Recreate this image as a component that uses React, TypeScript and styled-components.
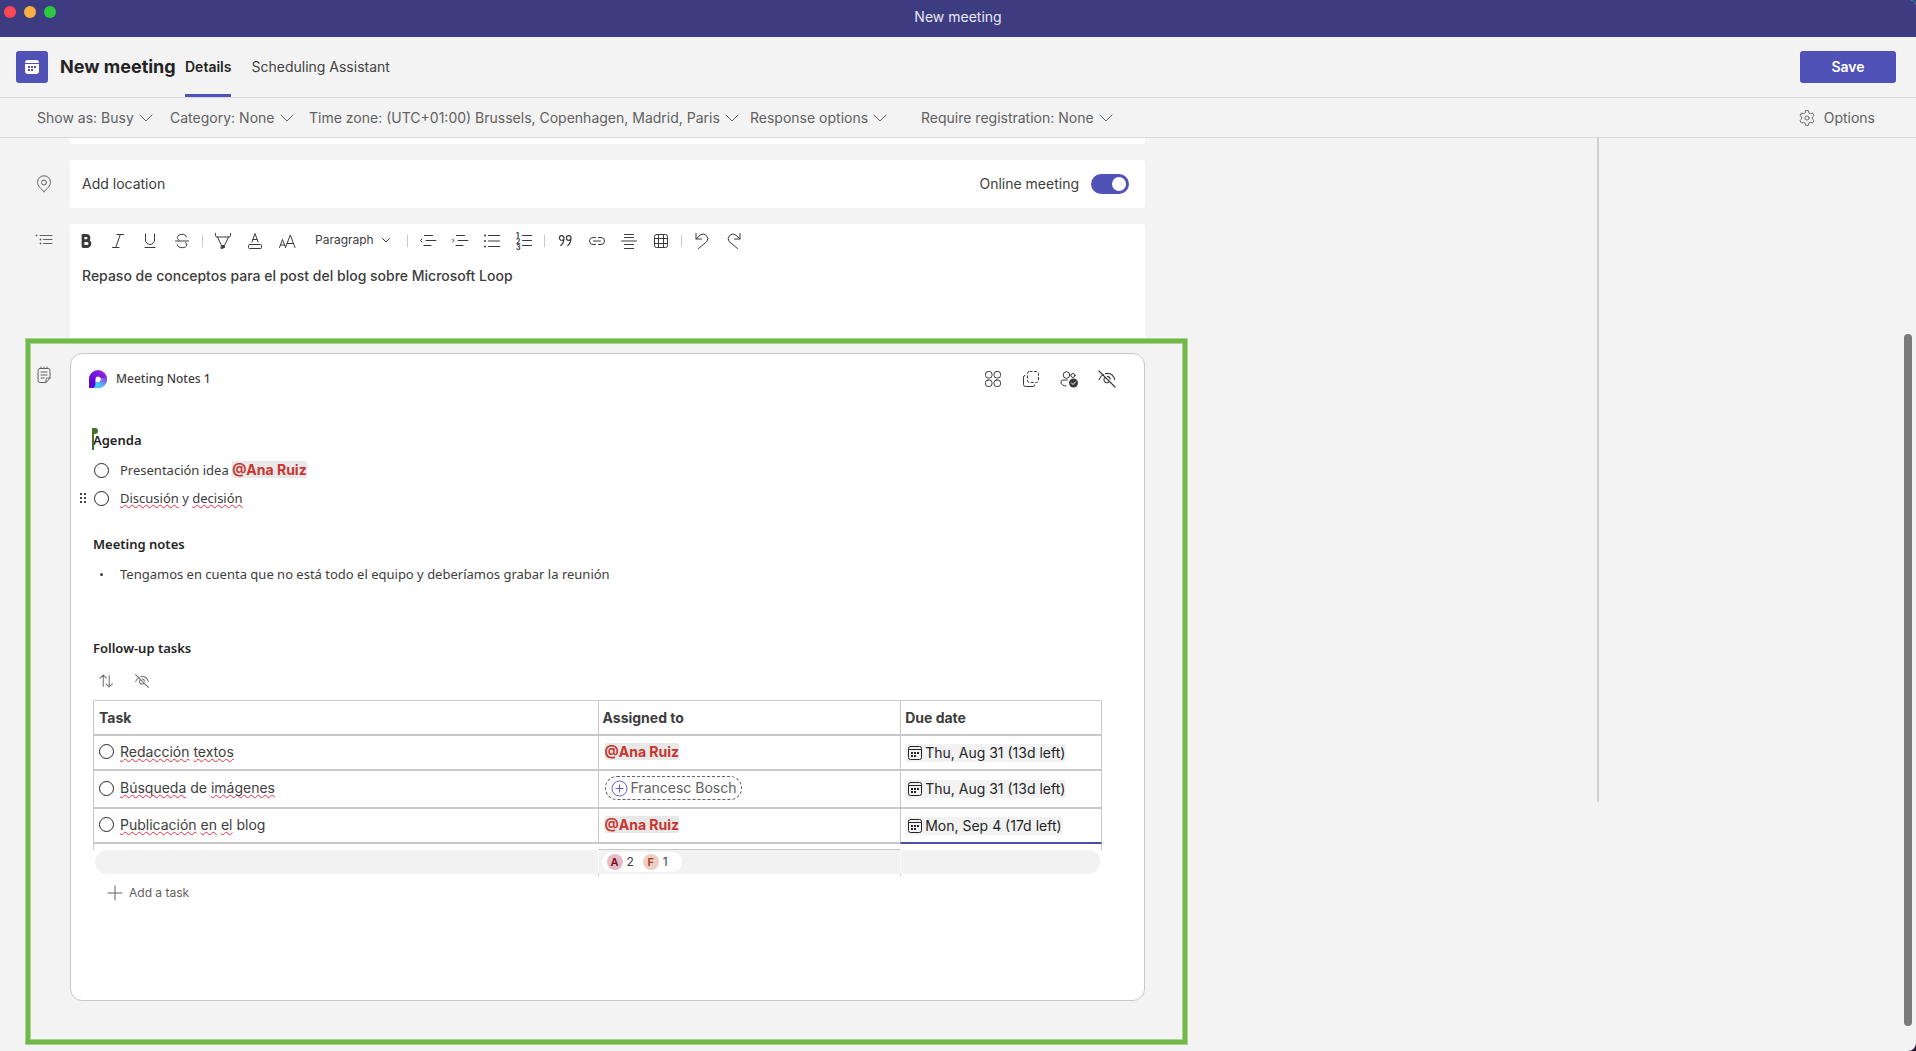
import React from "react";
import styled, { createGlobalStyle, css } from "styled-components";

const ui = '"Inter", "Liberation Sans", sans-serif';
const doc = '"Noto Sans", "Open Sans", sans-serif';

const GlobalStyle = createGlobalStyle`
  *, *::before, *::after { box-sizing: border-box; }
  body {
    margin: 0;
    background: linear-gradient(#14587e, #2b1030);
    font-family: ${ui};
    font-size: 14px;
    line-height: 20px;
    color: #3d3d3d;
  }
  button, input, select, textarea { font: inherit; color: inherit; }
  button, select { cursor: pointer; }
  h1, h2, p, ul { margin: 0; padding: 0; }
`;

/* ---------- window chrome ---------- */

const Window = styled.div`
  display: flex;
  flex-direction: column;
  min-height: 100vh;
  overflow: hidden;
  background: #f3f3f3;
  border-radius: 0 6px 8px 0;
`;

const TitleBar = styled.div`
  display: grid;
  grid-template-columns: 1fr auto 1fr;
  align-items: start;
  height: 37px;
  padding: 6px 4px;
  background: #3d3c80;
  color: #e8e8f4;
`;

const Lights = styled.div`
  display: flex;
  gap: 8px;
`;

const Light = styled.button<{ $color: string }>`
  width: 12px;
  height: 12px;
  padding: 0;
  border: 0;
  border-radius: 50%;
  background: ${(p) => p.$color};
`;

const TitleText = styled.span`
  line-height: 22px;
`;

const Header = styled.header`
  display: flex;
  align-items: center;
  height: 61px;
  padding: 0 20px 0 16px;
  border-bottom: 1px solid #dadada;
`;

const AppBadge = styled.span`
  display: grid;
  place-items: center;
  width: 32px;
  height: 32px;
  border-radius: 3px;
  background: #5052b8;
`;

const PageTitle = styled.h1`
  width: 125px;
  padding-left: 12px;
  font-size: 18px;
  font-weight: 700;
  color: #242424;
  white-space: nowrap;
`;

const Tabs = styled.nav`
  display: flex;
  flex: 1;
  gap: 20px;
  align-self: stretch;
  padding-left: 12px;
`;

const Tab = styled.a<{ $active?: boolean }>`
  display: flex;
  align-items: center;
  padding-top: 3px;
  border-bottom: 3px solid ${(p) => (p.$active ? "#5052b8" : "transparent")};
  font-weight: ${(p) => (p.$active ? 600 : 400)};
  color: ${(p) => (p.$active ? "#242424" : "#424242")};
  text-decoration: none;
`;

const SaveButton = styled.button`
  width: 96px;
  height: 32px;
  border: 0;
  border-radius: 3px;
  background: #5052b8;
  color: #fff;
  font-weight: 600;
`;

const OptionsBar = styled.div`
  display: flex;
  align-items: center;
  height: 40px;
  padding: 0 41px 0 37px;
  border-bottom: 1px solid #dadada;
  color: #616161;
`;

const Field = styled.div<{ $width: number }>`
  display: flex;
  align-items: center;
  width: ${(p) => p.$width}px;
  white-space: nowrap;
`;

const FieldLabel = styled.label`
  margin-right: 4px;
`;

const SelectWrap = styled.span`
  display: inline-grid;
  grid-template-columns: auto 16px;
  column-gap: 4px;
  align-items: center;

  & > select {
    grid-area: 1 / 1 / 2 / 3;
    padding: 0 20px 0 0;
    border: 0;
    background: transparent;
    appearance: none;
  }
  & > svg {
    grid-area: 1 / 2;
    pointer-events: none;
  }
`;

const PlainButton = styled.button<{ $gap?: number }>`
  display: inline-flex;
  align-items: center;
  gap: ${(p) => p.$gap ?? 8}px;
  padding: 0;
  border: 0;
  background: none;
  white-space: nowrap;
`;

const Spacer = styled.span`
  flex: 1;
`;

/* ---------- body ---------- */

const Body = styled.main`
  position: relative;
  display: flex;
  flex: 1;
  align-items: flex-start;
`;

const FormPane = styled.div`
  flex: 1;
  min-width: 0;
  padding-bottom: 6px;
`;

const AttendeePane = styled.aside`
  width: 319px;
  height: 664px;
  border-left: 2px solid #cfcfcf;
`;

const ScrollThumb = styled.div`
  position: absolute;
  top: 196px;
  right: 4px;
  bottom: 25px;
  width: 8px;
  border-radius: 4px;
  background: #797979;
`;

const FormRow = styled.div<{ $gap?: boolean }>`
  display: grid;
  grid-template-columns: 70px minmax(0, 1075px);
  margin-bottom: ${(p) => (p.$gap ? 16 : 0)}px;
`;

const RowIcon = styled.span<{ $top?: number }>`
  display: flex;
  justify-content: flex-end;
  padding: ${(p) => p.$top ?? 0}px 16px 0 0;
  color: #616161;
`;

const CardTail = styled.div`
  grid-column: 2;
  height: 6px;
  border-radius: 0 0 3px 3px;
  background: #fff;
`;

const LocationCard = styled.div`
  display: flex;
  align-items: center;
  height: 48px;
  padding: 0 16px 0 12px;
  border-radius: 3px;
  background: #fff;
`;

const LocationInput = styled.input`
  flex: 1;
  padding: 0;
  border: 0;
  background: transparent;
  &::placeholder { color: #3d3d3d; opacity: 1; }
`;

const Toggle = styled.input`
  width: 38px;
  height: 20px;
  margin: 0 0 0 12px;
  border-radius: 10px;
  background: #c8c8c8;
  appearance: none;

  &::before {
    content: "";
    display: block;
    width: 14px;
    height: 14px;
    margin: 3px;
    border-radius: 50%;
    background: #fff;
  }
  &:checked { background: #5052b8; }
  &:checked::before { margin-left: 21px; }
`;

const EditorCard = styled.div`
  height: 114px;
  border-radius: 3px 3px 0 0;
  background: #fff;
`;

const EditorToolbar = styled.div`
  display: flex;
  align-items: center;
  height: 34px;
`;

const ToolButton = styled.button<{ $width?: number }>`
  display: grid;
  place-items: center;
  width: ${(p) => p.$width ?? 32}px;
  height: 32px;
  padding: 0;
  border: 0;
  background: none;
  color: #3a3a3a;
`;

const ToolDivider = styled.span`
  width: 1px;
  height: 12px;
  margin: 0 4px;
  background: #c8c8c8;
`;

const ParagraphWrap = styled.span`
  display: grid;
  grid-template-columns: 1fr 16px;
  align-items: center;
  width: 100px;
  padding: 0 9px 2px 12px;

  & > select {
    grid-area: 1 / 1 / 2 / 3;
    padding: 0;
    border: 0;
    background: transparent;
    font-size: 12px;
    appearance: none;
  }
  & > svg { grid-area: 1 / 2; pointer-events: none; }
`;

const EditorText = styled.textarea`
  display: block;
  width: 100%;
  height: 72px;
  padding: 8px 12px;
  border: 0;
  outline: 0;
  resize: none;
  background: transparent;
  font-weight: 500;
`;

/* ---------- notes component ---------- */

const Highlight = styled.section`
  display: grid;
  grid-template-columns: 44px minmax(0, 1075px) 42px;
  width: 1163px;
  max-width: calc(100% - 25px);
  margin-left: 25px;
  padding: 14px 0 43px;
  border: 1px solid #a8d492;
  box-shadow: inset 0 0 0 4px #70b84a, inset 0 0 0 5px #a8d492;
`;

const NotesCard = styled.article`
  min-height: 648px;
  padding: 0 42px 0 22px;
  border: 1px solid #c8c8c8;
  border-radius: 12px;
  background: #fff;
  font-family: ${doc};
`;

const NotesHeader = styled.header`
  display: flex;
  align-items: center;
  height: 50px;
  margin: 0 -24px 0 -4px;
`;

const NotesTitle = styled.span`
  flex: 1;
  padding-left: 9px;
  font-size: 12px;
  font-weight: 500;
`;

const DocHeading = styled.h2<{ $top: number }>`
  margin-top: ${(p) => p.$top}px;
  font-size: 13px;
  font-weight: 600;
  color: #242424;
`;

const Caret = styled.span`
  position: relative;
  &::before {
    content: "";
    position: absolute;
    top: -3px;
    left: -1px;
    width: 2px;
    height: 22px;
    background: #47702d;
  }
  &::after {
    content: "";
    position: absolute;
    top: -3px;
    left: 0;
    width: 5px;
    height: 6px;
    border-radius: 0 3px 3px 0;
    background: #47702d;
  }
`;

const DocList = styled.ul`
  display: flex;
  flex-direction: column;
  gap: 8px;
  margin-top: 10px;
  list-style: none;
`;

const DocItem = styled.li<{ $grip?: boolean }>`
  display: grid;
  grid-template-columns: ${(p) => (p.$grip ? "14px 27px" : "27px")} 1fr;
  align-items: center;
  height: 20px;
  margin-left: ${(p) => (p.$grip ? -14 : 0)}px;
  font-size: 13px;
`;

const Round = styled.input`
  width: 15px;
  height: 15px;
  margin: 0 0 0 1px;
  border: 1px solid #242424;
  border-radius: 50%;
  background: #fff;
  appearance: none;
  &:checked { background: #242424; }
`;

const Bullet = styled.span`
  width: 3px;
  height: 3px;
  margin-left: 7px;
  border-radius: 50%;
  background: #424242;
`;

const Mention = styled.a`
  display: inline-block;
  border-radius: 2px;
  background: #e8e8e8;
  color: #c8352f;
  font-family: ${ui};
  font-size: 14px;
  line-height: 17px;
  font-weight: 700;
  text-decoration: none;
`;

const Misspelt = styled.span`
  text-decoration: underline wavy #ee2a42 1px;
  text-underline-offset: 1px;
  text-decoration-skip-ink: none;
`;

const TableTools = styled.div`
  display: flex;
  gap: 4px;
  margin: 7px 0 3px -3px;
  & > button { color: #707070; }
`;

const Table = styled.table`
  width: 100%;
  border-spacing: 0;
  table-layout: fixed;
  font-family: ${ui};
`;

const cellBase = css`
  border-left: 1px solid #c8c8c8;
  border-bottom: 2px solid #c8c8c8;
  text-align: left;
  vertical-align: middle;
  &:last-child { border-right: 1px solid #c8c8c8; }
`;

const Th = styled.th`
  ${cellBase}
  height: 36px;
  padding: 0 4px;
  border-top: 1px solid #c8c8c8;
  font-weight: 700;
  &:first-child { padding-left: 5px; border-top-left-radius: 2px; }
  &:last-child { border-top-right-radius: 2px; }
`;

const Td = styled.td<{ $active?: boolean }>`
  ${cellBase}
  height: 35px;
  padding: 0 6px 2px;
  ${(p) => p.$active && "border-bottom-color: #4b4cae;"}
  &:first-child { padding-left: 4px; }
  &:last-child { padding-left: 4px; }
`;

const TallRow = styled.tr`
  & > td { height: 38px; }
`;

const TaskLabel = styled.label`
  display: grid;
  grid-template-columns: 22px 1fr;
  align-items: center;
`;

const Person = styled.button`
  display: inline-flex;
  align-items: center;
  gap: 3px;
  height: 24px;
  padding: 0 5px;
  border: 1px dashed #616161;
  border-radius: 12px;
  background: none;
  color: #616161;
  vertical-align: middle;
  white-space: nowrap;
`;

const DateChip = styled.button`
  display: inline-flex;
  align-items: center;
  gap: 2px;
  height: 18px;
  padding: 0 1px 0 2px;
  border: 0;
  border-radius: 2px;
  background: #f2f2f2;
  color: #242424;
  vertical-align: middle;
  white-space: nowrap;
`;

const FootCell = styled.td`
  padding: 0;
  &::before { content: ""; display: block; height: 6px; }
  &::after { content: ""; display: block; height: 2px; border-left: 1px solid #c8c8c8; }
  &:first-child { padding-left: 2px; }
  &:first-child::before { margin-left: -2px; border-left: 1px solid #c8c8c8; }
  &:first-child::after { border: 0; }
  &:nth-child(2)::before { border-bottom: 1px solid #c8c8c8; }
  &:last-child { padding-right: 2px; }
  &:last-child::before { margin-right: -2px; border-right: 1px solid #c8c8c8; }
`;

const FootFill = styled.div<{ $radius: string; $seam?: boolean }>`
  display: flex;
  align-items: center;
  height: 24px;
  padding-left: 3px;
  border-left: ${(p) => (p.$seam ? "1px solid #fff" : "0")};
  border-radius: ${(p) => p.$radius};
  background: #f2f2f2;
`;

const Tally = styled.div`
  display: flex;
  align-items: center;
  height: 20px;
  padding: 0 14px 0 5px;
  border-radius: 10px;
  background: #fff;
  font-size: 12px;
`;

const Avatar = styled.span<{ $bg: string; $fg: string }>`
  display: grid;
  place-items: center;
  width: 16px;
  height: 16px;
  margin-right: 4px;
  border-radius: 50%;
  background: ${(p) => p.$bg};
  color: ${(p) => p.$fg};
  font-size: 11px;
  line-height: 16px;
  font-weight: 600;
  span + & { margin-left: 9px; }
`;

const AddTask = styled(PlainButton)`
  gap: 6px;
  margin: 7px 0 0 14px;
  color: #616161;
  font-family: ${ui};
  font-size: 12px;
`;

/* ---------- icons ---------- */

type IconProps = { d?: string; size?: number; box?: number; width?: number; children?: React.ReactNode };

const Icon = ({ d, size = 20, box = 20, width = 1, children }: IconProps) => (
  <svg width={size} height={size} viewBox={`0 0 ${box} ${box}`} fill="none" stroke="currentColor" strokeWidth={width} strokeLinecap="round" strokeLinejoin="round" aria-hidden="true">
    {d && <path d={d} />}
    {children}
  </svg>
);

const Chevron = () => <Icon size={16} box={16} d="M2 5l6 6 6-6" />;

const HiddenEye = ({ size = 20 }: { size?: number }) => (
  <Icon size={size} width={size < 20 ? 1.3 : 1.1}>
    <path d="M2 2l16 16M2.200 10.500c.8-2.300 2.200-4 4.200-5M8.500 4.600c4.600-.9 8 1.600 9.300 5.900M8.300 8.200a3 3 0 1 0 4.100 4.200M10.500 7.400a3 3 0 0 1 2.600 2.800" />
  </Icon>
);

const CalendarIcon = () => (
  <Icon size={16} box={16}>
    <rect x="1.500" y="1.500" width="13" height="13" rx="2" />
    <path d="M1.500 4.500h13" />
    <g fill="currentColor" stroke="none">
      <rect x="4" y="7" width="2" height="2" /><rect x="7" y="7" width="2" height="2" /><rect x="10" y="7" width="2" height="2" />
      <rect x="4" y="10" width="2" height="2" /><rect x="7" y="10" width="2" height="2" />
    </g>
  </Icon>
);

const LoopLogo = () => (
  <svg width="18" height="18" viewBox="0 0 18 18" aria-hidden="true">
    <defs>
      <linearGradient id="loopA" x1="0" y1="1" x2="1" y2="0">
        <stop offset="0.2" stopColor="#5b07dc" />
        <stop offset="1" stopColor="#a02be0" />
      </linearGradient>
      <linearGradient id="loopB" x1="0" y1="1" x2="1" y2="0">
        <stop offset="0" stopColor="#36e6fb" />
        <stop offset="0.5" stopColor="#5fa8f5" />
        <stop offset="1" stopColor="#8a35e0" />
      </linearGradient>
    </defs>
    <path d="M0 18V9a9 9 0 0 1 18 0 9 9 0 0 1-9 9z" fill="url(#loopA)" />
    <path d="M5.500 18c2-1.500 1.500-4 3.500-6h3V8h5.900c.8 5.500-3.300 10-8.900 10z" fill="url(#loopB)" />
    <path d="M6 18H0V9h6z" fill="#5b07dc" />
    <path d="M6.500 12.200V8.800a2.800 2.800 0 1 1 2.800 3.400z" fill="#fff" />
    <path d="M4.500 18c1.700-1 2-3 2-5.800h3.500L8 18z" fill="#3fd6fa" />
  </svg>
);

const GRID_LINES = "M3.500 7.500h13M3.500 12.500h13M7.500 3.500v13M12.500 3.500v13";

type Tool = { label: string; icon: React.ReactNode };

const styleTools: Tool[] = [
  { label: "Bold", icon: <Icon width={2.8} d="M7 4.500h3.300a2.600 2.600 0 0 1 0 5.200H7zM7 9.700h4a2.900 2.900 0 0 1 0 5.800H7z" /> },
  { label: "Italic", icon: <Icon d="M9 3.500h6.500M4.500 16.500H11M12.300 3.500l-4.600 13" /> },
  { label: "Underline", icon: <Icon d="M5.500 3v6a4.500 4.500 0 0 0 9 0V3M5 16.500h10" /> },
  { label: "Strikethrough", icon: <Icon d="M14.500 6c-.5-1.800-2.200-2.700-4.500-2.700-2.600 0-4.500 1.200-4.500 3.200 0 1.200.5 2 1.500 2.600M3.500 10h13M13.300 11.500c.9.500 1.400 1.300 1.400 2.300 0 2-2 2.900-4.600 2.900-2.500 0-4.300-1-4.800-2.900" /> },
];

const colorTools: Tool[] = [
  {
    label: "Text highlight color",
    icon: (
      <Icon d="M2.500 2.500v2a1.500 1.500 0 0 0 1.500 1.500h12a1.500 1.500 0 0 0 1.500-1.500v-2M4.500 6l4 8.500h3l4-8.500">
        <path d="M8.500 15h3v1.500l-3 1z" fill="currentColor" />
      </Icon>
    ),
  },
  { label: "Font color", icon: <Icon d="M7 11l3-8.500 3 8.500M8 8.500h4"><rect x="3.500" y="13.500" width="13" height="4" rx="1" /></Icon> },
  { label: "Font size", icon: <Icon d="M2.500 16.500l3-8 3 8M3.500 14h4M8.500 16.500l4.800-12.500 4.700 12.500M10 12.500h6.500" /> },
];

const listTools: Tool[] = [
  { label: "Decrease indent", icon: <Icon d="M6.500 4.500h8M8 9.500h10M6 14.500h7M4 8L2.500 9.500 4 11" /> },
  { label: "Increase indent", icon: <Icon d="M6.500 4.500h8M8 9.500h10M6 14.500h7M2.500 8L4 9.500 2.500 11" /> },
  {
    label: "Bulleted list",
    icon: (
      <Icon d="M6.500 4.500h11M6.500 10h11M6.500 15.500h11">
        <path d="M3 4.500h.01M3 10h.01M3 15.500h.01" strokeWidth="2" />
      </Icon>
    ),
  },
  {
    label: "Numbered list",
    icon: (
      <Icon d="M8.500 4.500h9M8.500 9.500h9M8.500 14.500h9">
        <g fill="currentColor" stroke="none" fontFamily="Inter" fontSize="7" fontWeight="700">
          <text x="2" y="6.500">1</text>
          <text x="2" y="12.500">2</text>
          <text x="2" y="18.500">3</text>
        </g>
      </Icon>
    ),
  },
];

const insertTools: Tool[] = [
  { label: "Quote", icon: <Icon width={1.2} d="M9 7a2.300 2.300 0 1 1-4.600 0A2.300 2.300 0 0 1 9 7c0 3.400-.8 5.500-3.200 7.500M16 7a2.300 2.300 0 1 1-4.600 0A2.300 2.300 0 0 1 16 7c0 3.400-.8 5.500-3.200 7.500" /> },
  { label: "Insert link", icon: <Icon d="M8.500 6.500H6a3.500 3.500 0 0 0 0 7h2.500M11.500 6.500H14a3.500 3.500 0 0 1 0 7h-2.500M6.500 10h7" /> },
  { label: "Insert horizontal rule", icon: <Icon d="M5.500 3.500h9M5.500 6.500h9M2.500 10h15M5.500 13.500h9M5.500 17.500h9" /> },
  { label: "Insert table", icon: <Icon d={GRID_LINES}><rect x="3.500" y="3.500" width="13" height="13" rx="2" /></Icon> },
];

const historyTools: Tool[] = [
  { label: "Undo", icon: <Icon d="M4 2.500V8h5.500M4 8l4-3.800a4.700 4.700 0 0 1 6.800 6.400L6.500 17.500" /> },
  { label: "Redo", icon: <Icon d="M16 2.500V8h-5.500M16 8l-4-3.800a4.700 4.700 0 0 0-6.800 6.400l8.300 6.900" /> },
];

const ToolGroup = ({ tools }: { tools: Tool[] }) => (
  <>
    {tools.map((t) => (
      <ToolButton key={t.label} type="button" aria-label={t.label}>{t.icon}</ToolButton>
    ))}
  </>
);

const OptionSelect = ({ id, label, value, width }: { id: string; label: string; value: string; width: number }) => (
  <Field $width={width}>
    <FieldLabel htmlFor={id}>{label}</FieldLabel>
    <SelectWrap>
      <select id={id} defaultValue={value}><option>{value}</option></select>
      <Chevron />
    </SelectWrap>
  </Field>
);

const DueDate = ({ children }: { children: React.ReactNode }) => (
  <DateChip type="button"><CalendarIcon />{children}</DateChip>
);

export default function App() {
  return (
    <>
      <GlobalStyle />
      <Window>
        <TitleBar>
          <Lights>
            <Light $color="#fe4655" aria-label="Close window" />
            <Light $color="#fdb043" aria-label="Minimize window" />
            <Light $color="#2bc840" aria-label="Zoom window" />
          </Lights>
          <TitleText>New meeting</TitleText>
        </TitleBar>

        <Header>
          <AppBadge>
            <svg width="14" height="14" viewBox="0 0 14 14" aria-hidden="true">
              <path d="M0 3a3 3 0 0 1 3-3h8a3 3 0 0 1 3 3zM0 4h14v7a3 3 0 0 1-3 3H3a3 3 0 0 1-3-3z" fill="#fff" />
              <path d="M3 6h2v2H3zM6 6h2v2H6zM9 6h2v2H9zM3 9h2v2H3zM6 9h2v2H6z" fill="#5052b8" />
            </svg>
          </AppBadge>
          <PageTitle>New meeting</PageTitle>
          <Tabs>
            <Tab href="#details" $active>Details</Tab>
            <Tab href="#scheduling">Scheduling Assistant</Tab>
          </Tabs>
          <SaveButton type="button">Save</SaveButton>
        </Header>

        <OptionsBar>
          <OptionSelect id="show-as" label="Show as:" value="Busy" width={133} />
          <OptionSelect id="category" label="Category:" value="None" width={139} />
          <OptionSelect id="time-zone" label="Time zone:" value="(UTC+01:00) Brussels, Copenhagen, Madrid, Paris" width={441} />
          <Field $width={171}>
            <PlainButton type="button" $gap={4}>Response options<Chevron /></PlainButton>
          </Field>
          <OptionSelect id="registration" label="Require registration:" value="None" width={200} />
          <Spacer />
          <PlainButton type="button">
            <Icon size={18} d="M8.400 1.800h3.200l.5 2.500 1.700 1 2.400-.9 1.600 2.800-1.900 1.700v2.200l1.900 1.700-1.600 2.800-2.400-.9-1.700 1-.5 2.500H8.400l-.5-2.500-1.700-1-2.400.9-1.600-2.800 1.900-1.700V8.900L2.200 7.200l1.600-2.800 2.400.9 1.700-1z">
              <circle cx="10" cy="10" r="2.300" />
            </Icon>
            Options
          </PlainButton>
        </OptionsBar>

        <Body>
          <FormPane>
            <FormRow $gap><CardTail /></FormRow>

            <FormRow $gap>
              <RowIcon $top={14}>
                <Icon d="M10 17.500c-3-2.700-6.500-5.500-6.500-9.200a6.500 6.500 0 0 1 13 0c0 3.700-3.500 6.500-6.500 9.200z">
                  <circle cx="10" cy="8.500" r="2.500" />
                </Icon>
              </RowIcon>
              <LocationCard>
                <LocationInput type="text" aria-label="Location" placeholder="Add location" />
                <label htmlFor="online">Online meeting</label>
                <Toggle id="online" type="checkbox" role="switch" defaultChecked />
              </LocationCard>
            </FormRow>

            <FormRow>
              <RowIcon $top={6}>
                <Icon d="M6 5.500h12M9.500 9.500H18M9.500 13.500H18">
                  <path d="M2.500 5.500h.01M6.500 9.500h.01M6.500 13.500h.01" strokeWidth="1.800" />
                </Icon>
              </RowIcon>
              <EditorCard>
                <EditorToolbar>
                  <ToolGroup tools={styleTools} />
                  <ToolDivider />
                  <ToolGroup tools={colorTools} />
                  <ParagraphWrap>
                    <select aria-label="Paragraph style" defaultValue="Paragraph"><option>Paragraph</option></select>
                    <Icon size={16} box={16} d="M4.500 6.500L8 10l3.500-3.500" />
                  </ParagraphWrap>
                  <ToolDivider />
                  <ToolGroup tools={listTools} />
                  <ToolDivider />
                  <ToolGroup tools={insertTools} />
                  <ToolDivider />
                  <ToolGroup tools={historyTools} />
                </EditorToolbar>
                <EditorText aria-label="Meeting description" spellCheck={false} defaultValue="Repaso de conceptos para el post del blog sobre Microsoft Loop" />
              </EditorCard>
            </FormRow>

            <Highlight>
              <RowIcon $top={12}>
                <Icon d="M6 3.500h8a2 2 0 0 1 2 2v7.500l-4 4.500H6a2 2 0 0 1-2-2v-10a2 2 0 0 1 2-2zM16 13h-2.500a1.500 1.500 0 0 0-1.500 1.500v3M7 2v1.500M10 2v1.500M13 2v1.500M7 7h6M7 10h6M7 13h3" />
              </RowIcon>
              <NotesCard>
                <NotesHeader>
                  <LoopLogo />
                  <NotesTitle>Meeting Notes 1</NotesTitle>
                  <ToolButton $width={38} type="button" aria-label="View apps">
                    <Icon>
                      <rect x="2.500" y="2.500" width="6.500" height="6.500" rx="2.600" />
                      <rect x="11" y="2.500" width="6.500" height="6.500" rx="2.600" />
                      <rect x="2.500" y="11" width="6.500" height="6.500" rx="2.600" />
                      <rect x="11" y="11" width="6.500" height="6.500" rx="2.600" />
                    </Icon>
                  </ToolButton>
                  <ToolButton $width={38} type="button" aria-label="Copy component">
                    <Icon>
                      <rect x="6.500" y="2.500" width="11" height="11" rx="2" strokeDasharray="3 1.500" strokeLinecap="butt" />
                      <path d="M4 6.500a1.500 1.500 0 0 0-1.500 1.500v7.500a2 2 0 0 0 2 2H12a1.500 1.500 0 0 0 1.500-1.500" />
                    </Icon>
                  </ToolButton>
                  <ToolButton $width={38} type="button" aria-label="People with access">
                    <Icon>
                      <circle cx="7.500" cy="6" r="3.300" />
                      <circle cx="14" cy="6.500" r="2" />
                      <path d="M8.500 11H4a2 2 0 0 0-2 2c0 2.700 2 3.800 5 4" />
                      <circle cx="14.500" cy="14" r="4.500" fill="currentColor" stroke="none" />
                      <path d="M12.500 14l1.500 1.500 2.600-2.700" stroke="#fff" />
                    </Icon>
                  </ToolButton>
                  <ToolButton $width={38} type="button" aria-label="Hide component"><HiddenEye /></ToolButton>
                </NotesHeader>

                <DocHeading $top={26}><Caret />Agenda</DocHeading>
                <DocList>
                  <DocItem>
                    <Round type="checkbox" aria-label="Presentación idea" />
                    <span>Presentación idea <Mention href="#ana">@Ana Ruiz</Mention></span>
                  </DocItem>
                  <DocItem $grip>
                    <svg width="8" height="12" viewBox="0 0 8 12" fill="#424242" aria-hidden="true">
                      <path d="M1 1h2v2H1zM5 1h2v2H5zM1 5h2v2H1zM5 5h2v2H5zM1 9h2v2H1zM5 9h2v2H5z" />
                    </svg>
                    <Round type="checkbox" aria-label="Discusión y decisión" />
                    <span><Misspelt>Discusión</Misspelt> y <Misspelt>decisión</Misspelt></span>
                  </DocItem>
                </DocList>

                <DocHeading $top={26}>Meeting notes</DocHeading>
                <DocList>
                  <DocItem>
                    <Bullet />
                    <span>Tengamos en cuenta que no está todo el equipo y deberíamos grabar la reunión</span>
                  </DocItem>
                </DocList>

                <DocHeading $top={54}>Follow-up tasks</DocHeading>
                <TableTools>
                  <ToolButton type="button" aria-label="Sort">
                    <Icon size={16} width={1.300} d="M6.500 17V2.500M2.500 6.500l4-4 4 4M14 3v14.500M10 13.500l4 4 4-4" />
                  </ToolButton>
                  <ToolButton type="button" aria-label="Hide columns"><HiddenEye size={16} /></ToolButton>
                </TableTools>

                <Table>
                  <colgroup>
                    <col style={{ width: "50%" }} />
                    <col style={{ width: "30%" }} />
                    <col style={{ width: "20%" }} />
                  </colgroup>
                  <thead>
                    <tr><Th>Task</Th><Th>Assigned to</Th><Th>Due date</Th></tr>
                  </thead>
                  <tbody>
                    <tr>
                      <Td><TaskLabel><Round type="checkbox" /><span><Misspelt>Redacción</Misspelt> <Misspelt>textos</Misspelt></span></TaskLabel></Td>
                      <Td><Mention href="#ana">@Ana Ruiz</Mention></Td>
                      <Td><DueDate>Thu, Aug 31 (13d left)</DueDate></Td>
                    </tr>
                    <TallRow>
                      <Td><TaskLabel><Round type="checkbox" /><span><Misspelt>Búsqueda</Misspelt> de <Misspelt>imágenes</Misspelt></span></TaskLabel></Td>
                      <Td>
                        <Person type="button">
                          <svg width="17" height="17" viewBox="0 0 17 17" fill="none" stroke="#5b5fc7" aria-hidden="true">
                            <circle cx="8.500" cy="8.500" r="7.500" />
                            <path d="M8.500 4.500v8M4.500 8.500h8" />
                          </svg>
                          Francesc Bosch
                        </Person>
                      </Td>
                      <Td><DueDate>Thu, Aug 31 (13d left)</DueDate></Td>
                    </TallRow>
                    <tr>
                      <Td><TaskLabel><Round type="checkbox" /><span><Misspelt>Publicación</Misspelt> <Misspelt>en</Misspelt> <Misspelt>el</Misspelt> blog</span></TaskLabel></Td>
                      <Td><Mention href="#ana">@Ana Ruiz</Mention></Td>
                      <Td $active><DueDate>Mon, Sep 4 (17d left)</DueDate></Td>
                    </tr>
                  </tbody>
                  <tfoot>
                    <tr>
                      <FootCell><FootFill $radius="12px 0 0 12px" /></FootCell>
                      <FootCell>
                        <FootFill $radius="0" $seam>
                          <Tally>
                            <Avatar $bg="#e5bcc6" $fg="#750b1c">A</Avatar><span>2</span>
                            <Avatar $bg="#edd0c4" $fg="#a93a1c">F</Avatar><span>1</span>
                          </Tally>
                        </FootFill>
                      </FootCell>
                      <FootCell><FootFill $radius="0 12px 12px 0" $seam /></FootCell>
                    </tr>
                  </tfoot>
                </Table>

                <AddTask type="button">
                  <Icon size={16} box={16} d="M8 1v14M1 8h14" />
                  Add a task
                </AddTask>
              </NotesCard>
            </Highlight>
          </FormPane>
          <AttendeePane aria-label="Attendees" />
          <ScrollThumb />
        </Body>
      </Window>
    </>
  );
}
